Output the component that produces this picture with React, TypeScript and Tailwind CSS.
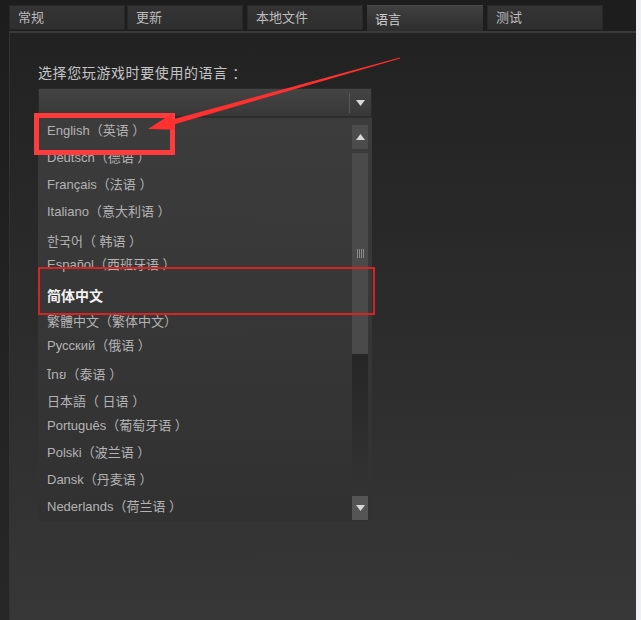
import React from 'react';

const tabs = [
  { label: '常规', cls: 'ml-0' },
  { label: '更新', cls: 'ml-[2px]' },
  { label: '本地文件', cls: 'ml-[4px]' },
  { label: '语言', cls: 'ml-[4px]', active: true },
  { label: '测试', cls: 'ml-[4px]' },
];

// mt values follow the uneven row spacing of the original list
const languages = [
  { name: 'English（英语 ）', mt: 'mt-[5px]' },
  { name: 'Deutsch（德语 ）', mt: 'mt-[11px]' },
  { name: 'Français（法语 ）', mt: 'mt-[11px]' },
  { name: 'Italiano（意大利语 ）', mt: 'mt-[11px]' },
  { name: '한국어（ 韩语 ）', mt: 'mt-[14px]' },
  { name: 'Español（西班牙语 ）', mt: 'mt-[7px]' },
  { name: '简体中文', mt: 'mt-[15px]', selected: true },
  { name: '繁體中文（繁体中文）', mt: 'mt-[10px]' },
  { name: 'Русский（俄语 ）', mt: 'mt-[8px]' },
  { name: 'ไทย（泰语 ）', mt: 'mt-[13px]' },
  { name: '日本語（ 日语 ）', mt: 'mt-[11px]' },
  { name: 'Português（葡萄牙语 ）', mt: 'mt-[8px]' },
  { name: 'Polski（波兰语 ）', mt: 'mt-[11px]' },
  { name: 'Dansk（丹麦语 ）', mt: 'mt-[11px]' },
  { name: 'Nederlands（荷兰语 ）', mt: 'mt-[11px]' },
];

const font = "font-['Liberation_Sans','Noto_Sans_CJK_SC','Noto_Sans_Thai','DejaVu_Sans',sans-serif]";

function Tri({ up }: { up?: boolean }) {
  return (
    <svg width="9" height="6" viewBox="0 0 9 6">
      <path d={up ? 'M0 6 L4.5 0 L9 6 Z' : 'M0 0 L9 0 L4.5 6 Z'} fill="#d8d8d8" />
    </svg>
  );
}

export default function App() {
  return (
    <div className={`w-[641px] h-[620px] flex bg-[#1d1d1d] overflow-hidden ${font}`}>
      <div className="w-[9px] bg-gradient-to-b from-[#1d1d1d] to-[#272727]" />

      <div className="w-[627px] flex flex-col relative">
        {/* tab strip */}
        <div className="h-[31px] pt-[5px] flex bg-[#1d1d1d]">
          {tabs.map(t => (
            <div
              key={t.label}
              className={`${t.cls} w-[116px] flex items-center pl-[8px] text-[13px] ${
                t.active
                  ? 'h-[28px] bg-gradient-to-b from-[#404040] to-[#2c2c2c] text-[#cfcfcf] border-t border-[#4a4a4a]'
                  : 'h-[25px] bg-gradient-to-b from-[#343434] to-[#2f2f2f] text-[#bcbcbc] border border-[#282828]'
              }`}
            >
              {t.label}
            </div>
          ))}
        </div>
        <div className="h-[2px] bg-[#3a3a3a]" />

        {/* page body */}
        <div className="flex-1 border-l border-[#333] bg-gradient-to-b from-[#222222] via-[#2c2c2c] to-[#373737] pl-[28px]">
          <div className="mt-[32px] text-[14px] leading-[16px] tracking-[0.6px] text-[#c4c4c4]">选择您玩游戏时要使用的语言 ：</div>

          {/* closed select */}
          <div className="mt-[7px] w-[334px] h-[29px] flex items-center justify-end bg-gradient-to-b from-[#444444] to-[#383838] border border-[#2b2b2b]">
            <div className="w-px h-[20px] bg-[#5a5a5a] mr-[6px]" />
            <div className="mr-[6px] flex items-center"><Tri /></div>
          </div>

          {/* open list */}
          <div className="w-[334px] h-[404px] flex bg-gradient-to-b from-[#3c3c3c] to-[#313131] border-t border-[#2e2e2e]">
            <div className="flex-1 flex flex-col pl-[9px]">
              {languages.map(l => (
                <div
                  key={l.name}
                  className={`${l.mt} leading-[16px] whitespace-pre ${
                    l.selected ? 'text-[14px] font-bold text-[#f2f2f2]' : 'text-[13px] text-[#b3b3b3]'
                  }`}
                >
                  {l.name}
                </div>
              ))}
            </div>

            {/* scrollbar */}
            <div className="w-[16px] mr-[4px] flex flex-col pt-[7px] pb-[1px]">
              <div className="h-[24px] bg-[#4c4c4c] flex items-center justify-center"><Tri up /></div>
              <div className="mt-[4px] h-[201px] bg-[#4a4a4a] flex items-center justify-center">
                <div className="flex gap-[1px] h-[9px]">
                  <div className="w-px bg-[#8a8a8a]" />
                  <div className="w-px bg-[#8a8a8a]" />
                  <div className="w-px bg-[#8a8a8a]" />
                  <div className="w-px bg-[#8a8a8a]" />
                </div>
              </div>
              <div className="flex-1 bg-gradient-to-b from-[#262626] to-[#333333]" />
              <div className="h-[24px] bg-[#555555] flex items-center justify-center"><Tri /></div>
            </div>
          </div>
        </div>

        {/* annotations */}
        <div className="absolute left-[25px] top-[113px] w-[141px] h-[42px] border-[5px] border-[#ff3b3b]" />
        <div className="absolute left-[29px] top-[267px] w-[337px] h-[48px] border-[2px] border-[#d42424]" />
        <svg className="absolute left-0 top-0 pointer-events-none" width="627" height="620" viewBox="9 0 627 620">
          <polygon points="173.7,124.4 172.3,119.6 399.9,57.5 400.1,58.5" fill="#ff3030" />
          <polygon points="148,129 170.8,114.3 175.2,129.7" fill="#ff3030" />
        </svg>
      </div>

      <div className="w-[5px] bg-[#eef0f4]" />
    </div>
  );
}
